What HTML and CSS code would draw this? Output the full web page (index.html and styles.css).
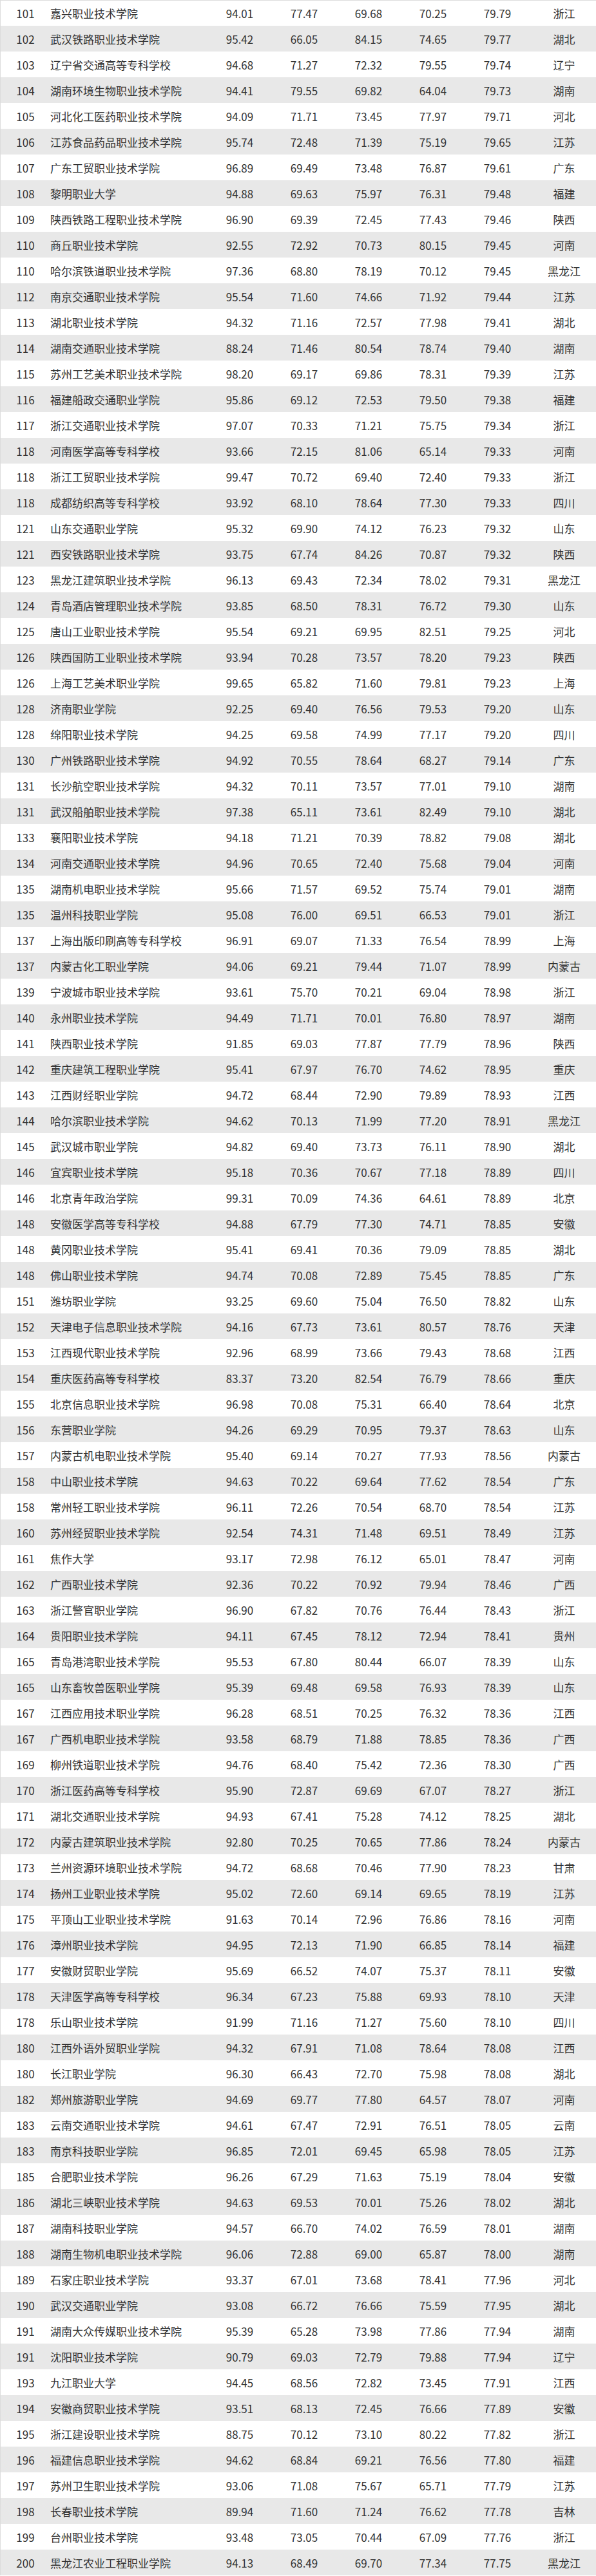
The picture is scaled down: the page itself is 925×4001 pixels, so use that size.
FILE: index.html
```html
<!DOCTYPE html>
<html lang="zh-CN">
<head>
<meta charset="utf-8">
<title>高职院校排名 101-200</title>
<link rel="stylesheet" href="styles.css">
</head>
<body>
<div class="rank-table">
<div class="row"><span class="c-rank">101</span><span class="c-name">嘉兴职业技术学院</span><span class="c-num">94.01</span><span class="c-num">77.47</span><span class="c-num">69.68</span><span class="c-num">70.25</span><span class="c-num">79.79</span><span class="c-prov">浙江</span></div>
<div class="row"><span class="c-rank">102</span><span class="c-name">武汉铁路职业技术学院</span><span class="c-num">95.42</span><span class="c-num">66.05</span><span class="c-num">84.15</span><span class="c-num">74.65</span><span class="c-num">79.77</span><span class="c-prov">湖北</span></div>
<div class="row"><span class="c-rank">103</span><span class="c-name">辽宁省交通高等专科学校</span><span class="c-num">94.68</span><span class="c-num">71.27</span><span class="c-num">72.32</span><span class="c-num">79.55</span><span class="c-num">79.74</span><span class="c-prov">辽宁</span></div>
<div class="row"><span class="c-rank">104</span><span class="c-name">湖南环境生物职业技术学院</span><span class="c-num">94.41</span><span class="c-num">79.55</span><span class="c-num">69.82</span><span class="c-num">64.04</span><span class="c-num">79.73</span><span class="c-prov">湖南</span></div>
<div class="row"><span class="c-rank">105</span><span class="c-name">河北化工医药职业技术学院</span><span class="c-num">94.09</span><span class="c-num">71.71</span><span class="c-num">73.45</span><span class="c-num">77.97</span><span class="c-num">79.71</span><span class="c-prov">河北</span></div>
<div class="row"><span class="c-rank">106</span><span class="c-name">江苏食品药品职业技术学院</span><span class="c-num">95.74</span><span class="c-num">72.48</span><span class="c-num">71.39</span><span class="c-num">75.19</span><span class="c-num">79.65</span><span class="c-prov">江苏</span></div>
<div class="row"><span class="c-rank">107</span><span class="c-name">广东工贸职业技术学院</span><span class="c-num">96.89</span><span class="c-num">69.49</span><span class="c-num">73.48</span><span class="c-num">76.87</span><span class="c-num">79.61</span><span class="c-prov">广东</span></div>
<div class="row"><span class="c-rank">108</span><span class="c-name">黎明职业大学</span><span class="c-num">94.88</span><span class="c-num">69.63</span><span class="c-num">75.97</span><span class="c-num">76.31</span><span class="c-num">79.48</span><span class="c-prov">福建</span></div>
<div class="row"><span class="c-rank">109</span><span class="c-name">陕西铁路工程职业技术学院</span><span class="c-num">96.90</span><span class="c-num">69.39</span><span class="c-num">72.45</span><span class="c-num">77.43</span><span class="c-num">79.46</span><span class="c-prov">陕西</span></div>
<div class="row"><span class="c-rank">110</span><span class="c-name">商丘职业技术学院</span><span class="c-num">92.55</span><span class="c-num">72.92</span><span class="c-num">70.73</span><span class="c-num">80.15</span><span class="c-num">79.45</span><span class="c-prov">河南</span></div>
<div class="row"><span class="c-rank">110</span><span class="c-name">哈尔滨铁道职业技术学院</span><span class="c-num">97.36</span><span class="c-num">68.80</span><span class="c-num">78.19</span><span class="c-num">70.12</span><span class="c-num">79.45</span><span class="c-prov">黑龙江</span></div>
<div class="row"><span class="c-rank">112</span><span class="c-name">南京交通职业技术学院</span><span class="c-num">95.54</span><span class="c-num">71.60</span><span class="c-num">74.66</span><span class="c-num">71.92</span><span class="c-num">79.44</span><span class="c-prov">江苏</span></div>
<div class="row"><span class="c-rank">113</span><span class="c-name">湖北职业技术学院</span><span class="c-num">94.32</span><span class="c-num">71.16</span><span class="c-num">72.57</span><span class="c-num">77.98</span><span class="c-num">79.41</span><span class="c-prov">湖北</span></div>
<div class="row"><span class="c-rank">114</span><span class="c-name">湖南交通职业技术学院</span><span class="c-num">88.24</span><span class="c-num">71.46</span><span class="c-num">80.54</span><span class="c-num">78.74</span><span class="c-num">79.40</span><span class="c-prov">湖南</span></div>
<div class="row"><span class="c-rank">115</span><span class="c-name">苏州工艺美术职业技术学院</span><span class="c-num">98.20</span><span class="c-num">69.17</span><span class="c-num">69.86</span><span class="c-num">78.31</span><span class="c-num">79.39</span><span class="c-prov">江苏</span></div>
<div class="row"><span class="c-rank">116</span><span class="c-name">福建船政交通职业学院</span><span class="c-num">95.86</span><span class="c-num">69.12</span><span class="c-num">72.53</span><span class="c-num">79.50</span><span class="c-num">79.38</span><span class="c-prov">福建</span></div>
<div class="row"><span class="c-rank">117</span><span class="c-name">浙江交通职业技术学院</span><span class="c-num">97.07</span><span class="c-num">70.33</span><span class="c-num">71.21</span><span class="c-num">75.75</span><span class="c-num">79.34</span><span class="c-prov">浙江</span></div>
<div class="row"><span class="c-rank">118</span><span class="c-name">河南医学高等专科学校</span><span class="c-num">93.66</span><span class="c-num">72.15</span><span class="c-num">81.06</span><span class="c-num">65.14</span><span class="c-num">79.33</span><span class="c-prov">河南</span></div>
<div class="row"><span class="c-rank">118</span><span class="c-name">浙江工贸职业技术学院</span><span class="c-num">99.47</span><span class="c-num">70.72</span><span class="c-num">69.40</span><span class="c-num">72.40</span><span class="c-num">79.33</span><span class="c-prov">浙江</span></div>
<div class="row"><span class="c-rank">118</span><span class="c-name">成都纺织高等专科学校</span><span class="c-num">93.92</span><span class="c-num">68.10</span><span class="c-num">78.64</span><span class="c-num">77.30</span><span class="c-num">79.33</span><span class="c-prov">四川</span></div>
<div class="row"><span class="c-rank">121</span><span class="c-name">山东交通职业学院</span><span class="c-num">95.32</span><span class="c-num">69.90</span><span class="c-num">74.12</span><span class="c-num">76.23</span><span class="c-num">79.32</span><span class="c-prov">山东</span></div>
<div class="row"><span class="c-rank">121</span><span class="c-name">西安铁路职业技术学院</span><span class="c-num">93.75</span><span class="c-num">67.74</span><span class="c-num">84.26</span><span class="c-num">70.87</span><span class="c-num">79.32</span><span class="c-prov">陕西</span></div>
<div class="row"><span class="c-rank">123</span><span class="c-name">黑龙江建筑职业技术学院</span><span class="c-num">96.13</span><span class="c-num">69.43</span><span class="c-num">72.34</span><span class="c-num">78.02</span><span class="c-num">79.31</span><span class="c-prov">黑龙江</span></div>
<div class="row"><span class="c-rank">124</span><span class="c-name">青岛酒店管理职业技术学院</span><span class="c-num">93.85</span><span class="c-num">68.50</span><span class="c-num">78.31</span><span class="c-num">76.72</span><span class="c-num">79.30</span><span class="c-prov">山东</span></div>
<div class="row"><span class="c-rank">125</span><span class="c-name">唐山工业职业技术学院</span><span class="c-num">95.54</span><span class="c-num">69.21</span><span class="c-num">69.95</span><span class="c-num">82.51</span><span class="c-num">79.25</span><span class="c-prov">河北</span></div>
<div class="row"><span class="c-rank">126</span><span class="c-name">陕西国防工业职业技术学院</span><span class="c-num">93.94</span><span class="c-num">70.28</span><span class="c-num">73.57</span><span class="c-num">78.20</span><span class="c-num">79.23</span><span class="c-prov">陕西</span></div>
<div class="row"><span class="c-rank">126</span><span class="c-name">上海工艺美术职业学院</span><span class="c-num">99.65</span><span class="c-num">65.82</span><span class="c-num">71.60</span><span class="c-num">79.81</span><span class="c-num">79.23</span><span class="c-prov">上海</span></div>
<div class="row"><span class="c-rank">128</span><span class="c-name">济南职业学院</span><span class="c-num">92.25</span><span class="c-num">69.40</span><span class="c-num">76.56</span><span class="c-num">79.53</span><span class="c-num">79.20</span><span class="c-prov">山东</span></div>
<div class="row"><span class="c-rank">128</span><span class="c-name">绵阳职业技术学院</span><span class="c-num">94.25</span><span class="c-num">69.58</span><span class="c-num">74.99</span><span class="c-num">77.17</span><span class="c-num">79.20</span><span class="c-prov">四川</span></div>
<div class="row"><span class="c-rank">130</span><span class="c-name">广州铁路职业技术学院</span><span class="c-num">94.92</span><span class="c-num">70.55</span><span class="c-num">78.64</span><span class="c-num">68.27</span><span class="c-num">79.14</span><span class="c-prov">广东</span></div>
<div class="row"><span class="c-rank">131</span><span class="c-name">长沙航空职业技术学院</span><span class="c-num">94.32</span><span class="c-num">70.11</span><span class="c-num">73.57</span><span class="c-num">77.01</span><span class="c-num">79.10</span><span class="c-prov">湖南</span></div>
<div class="row"><span class="c-rank">131</span><span class="c-name">武汉船舶职业技术学院</span><span class="c-num">97.38</span><span class="c-num">65.11</span><span class="c-num">73.61</span><span class="c-num">82.49</span><span class="c-num">79.10</span><span class="c-prov">湖北</span></div>
<div class="row"><span class="c-rank">133</span><span class="c-name">襄阳职业技术学院</span><span class="c-num">94.18</span><span class="c-num">71.21</span><span class="c-num">70.39</span><span class="c-num">78.82</span><span class="c-num">79.08</span><span class="c-prov">湖北</span></div>
<div class="row"><span class="c-rank">134</span><span class="c-name">河南交通职业技术学院</span><span class="c-num">94.96</span><span class="c-num">70.65</span><span class="c-num">72.40</span><span class="c-num">75.68</span><span class="c-num">79.04</span><span class="c-prov">河南</span></div>
<div class="row"><span class="c-rank">135</span><span class="c-name">湖南机电职业技术学院</span><span class="c-num">95.66</span><span class="c-num">71.57</span><span class="c-num">69.52</span><span class="c-num">75.74</span><span class="c-num">79.01</span><span class="c-prov">湖南</span></div>
<div class="row"><span class="c-rank">135</span><span class="c-name">温州科技职业学院</span><span class="c-num">95.08</span><span class="c-num">76.00</span><span class="c-num">69.51</span><span class="c-num">66.53</span><span class="c-num">79.01</span><span class="c-prov">浙江</span></div>
<div class="row"><span class="c-rank">137</span><span class="c-name">上海出版印刷高等专科学校</span><span class="c-num">96.91</span><span class="c-num">69.07</span><span class="c-num">71.33</span><span class="c-num">76.54</span><span class="c-num">78.99</span><span class="c-prov">上海</span></div>
<div class="row"><span class="c-rank">137</span><span class="c-name">内蒙古化工职业学院</span><span class="c-num">94.06</span><span class="c-num">69.21</span><span class="c-num">79.44</span><span class="c-num">71.07</span><span class="c-num">78.99</span><span class="c-prov">内蒙古</span></div>
<div class="row"><span class="c-rank">139</span><span class="c-name">宁波城市职业技术学院</span><span class="c-num">93.61</span><span class="c-num">75.70</span><span class="c-num">70.21</span><span class="c-num">69.04</span><span class="c-num">78.98</span><span class="c-prov">浙江</span></div>
<div class="row"><span class="c-rank">140</span><span class="c-name">永州职业技术学院</span><span class="c-num">94.49</span><span class="c-num">71.71</span><span class="c-num">70.01</span><span class="c-num">76.80</span><span class="c-num">78.97</span><span class="c-prov">湖南</span></div>
<div class="row"><span class="c-rank">141</span><span class="c-name">陕西职业技术学院</span><span class="c-num">91.85</span><span class="c-num">69.03</span><span class="c-num">77.87</span><span class="c-num">77.79</span><span class="c-num">78.96</span><span class="c-prov">陕西</span></div>
<div class="row"><span class="c-rank">142</span><span class="c-name">重庆建筑工程职业学院</span><span class="c-num">95.41</span><span class="c-num">67.97</span><span class="c-num">76.70</span><span class="c-num">74.62</span><span class="c-num">78.95</span><span class="c-prov">重庆</span></div>
<div class="row"><span class="c-rank">143</span><span class="c-name">江西财经职业学院</span><span class="c-num">94.72</span><span class="c-num">68.44</span><span class="c-num">72.90</span><span class="c-num">79.89</span><span class="c-num">78.93</span><span class="c-prov">江西</span></div>
<div class="row"><span class="c-rank">144</span><span class="c-name">哈尔滨职业技术学院</span><span class="c-num">94.62</span><span class="c-num">70.13</span><span class="c-num">71.99</span><span class="c-num">77.20</span><span class="c-num">78.91</span><span class="c-prov">黑龙江</span></div>
<div class="row"><span class="c-rank">145</span><span class="c-name">武汉城市职业学院</span><span class="c-num">94.82</span><span class="c-num">69.40</span><span class="c-num">73.73</span><span class="c-num">76.11</span><span class="c-num">78.90</span><span class="c-prov">湖北</span></div>
<div class="row"><span class="c-rank">146</span><span class="c-name">宜宾职业技术学院</span><span class="c-num">95.18</span><span class="c-num">70.36</span><span class="c-num">70.67</span><span class="c-num">77.18</span><span class="c-num">78.89</span><span class="c-prov">四川</span></div>
<div class="row"><span class="c-rank">146</span><span class="c-name">北京青年政治学院</span><span class="c-num">99.31</span><span class="c-num">70.09</span><span class="c-num">74.36</span><span class="c-num">64.61</span><span class="c-num">78.89</span><span class="c-prov">北京</span></div>
<div class="row"><span class="c-rank">148</span><span class="c-name">安徽医学高等专科学校</span><span class="c-num">94.88</span><span class="c-num">67.79</span><span class="c-num">77.30</span><span class="c-num">74.71</span><span class="c-num">78.85</span><span class="c-prov">安徽</span></div>
<div class="row"><span class="c-rank">148</span><span class="c-name">黄冈职业技术学院</span><span class="c-num">95.41</span><span class="c-num">69.41</span><span class="c-num">70.36</span><span class="c-num">79.09</span><span class="c-num">78.85</span><span class="c-prov">湖北</span></div>
<div class="row"><span class="c-rank">148</span><span class="c-name">佛山职业技术学院</span><span class="c-num">94.74</span><span class="c-num">70.08</span><span class="c-num">72.89</span><span class="c-num">75.45</span><span class="c-num">78.85</span><span class="c-prov">广东</span></div>
<div class="row"><span class="c-rank">151</span><span class="c-name">潍坊职业学院</span><span class="c-num">93.25</span><span class="c-num">69.60</span><span class="c-num">75.04</span><span class="c-num">76.50</span><span class="c-num">78.82</span><span class="c-prov">山东</span></div>
<div class="row"><span class="c-rank">152</span><span class="c-name">天津电子信息职业技术学院</span><span class="c-num">94.16</span><span class="c-num">67.73</span><span class="c-num">73.61</span><span class="c-num">80.57</span><span class="c-num">78.76</span><span class="c-prov">天津</span></div>
<div class="row"><span class="c-rank">153</span><span class="c-name">江西现代职业技术学院</span><span class="c-num">92.96</span><span class="c-num">68.99</span><span class="c-num">73.66</span><span class="c-num">79.43</span><span class="c-num">78.68</span><span class="c-prov">江西</span></div>
<div class="row"><span class="c-rank">154</span><span class="c-name">重庆医药高等专科学校</span><span class="c-num">83.37</span><span class="c-num">73.20</span><span class="c-num">82.54</span><span class="c-num">76.79</span><span class="c-num">78.66</span><span class="c-prov">重庆</span></div>
<div class="row"><span class="c-rank">155</span><span class="c-name">北京信息职业技术学院</span><span class="c-num">96.98</span><span class="c-num">70.08</span><span class="c-num">75.31</span><span class="c-num">66.40</span><span class="c-num">78.64</span><span class="c-prov">北京</span></div>
<div class="row"><span class="c-rank">156</span><span class="c-name">东营职业学院</span><span class="c-num">94.26</span><span class="c-num">69.29</span><span class="c-num">70.95</span><span class="c-num">79.37</span><span class="c-num">78.63</span><span class="c-prov">山东</span></div>
<div class="row"><span class="c-rank">157</span><span class="c-name">内蒙古机电职业技术学院</span><span class="c-num">95.40</span><span class="c-num">69.14</span><span class="c-num">70.27</span><span class="c-num">77.93</span><span class="c-num">78.56</span><span class="c-prov">内蒙古</span></div>
<div class="row"><span class="c-rank">158</span><span class="c-name">中山职业技术学院</span><span class="c-num">94.63</span><span class="c-num">70.22</span><span class="c-num">69.64</span><span class="c-num">77.62</span><span class="c-num">78.54</span><span class="c-prov">广东</span></div>
<div class="row"><span class="c-rank">158</span><span class="c-name">常州轻工职业技术学院</span><span class="c-num">96.11</span><span class="c-num">72.26</span><span class="c-num">70.54</span><span class="c-num">68.70</span><span class="c-num">78.54</span><span class="c-prov">江苏</span></div>
<div class="row"><span class="c-rank">160</span><span class="c-name">苏州经贸职业技术学院</span><span class="c-num">92.54</span><span class="c-num">74.31</span><span class="c-num">71.48</span><span class="c-num">69.51</span><span class="c-num">78.49</span><span class="c-prov">江苏</span></div>
<div class="row"><span class="c-rank">161</span><span class="c-name">焦作大学</span><span class="c-num">93.17</span><span class="c-num">72.98</span><span class="c-num">76.12</span><span class="c-num">65.01</span><span class="c-num">78.47</span><span class="c-prov">河南</span></div>
<div class="row"><span class="c-rank">162</span><span class="c-name">广西职业技术学院</span><span class="c-num">92.36</span><span class="c-num">70.22</span><span class="c-num">70.92</span><span class="c-num">79.94</span><span class="c-num">78.46</span><span class="c-prov">广西</span></div>
<div class="row"><span class="c-rank">163</span><span class="c-name">浙江警官职业学院</span><span class="c-num">96.90</span><span class="c-num">67.82</span><span class="c-num">70.76</span><span class="c-num">76.44</span><span class="c-num">78.43</span><span class="c-prov">浙江</span></div>
<div class="row"><span class="c-rank">164</span><span class="c-name">贵阳职业技术学院</span><span class="c-num">94.11</span><span class="c-num">67.45</span><span class="c-num">78.12</span><span class="c-num">72.94</span><span class="c-num">78.41</span><span class="c-prov">贵州</span></div>
<div class="row"><span class="c-rank">165</span><span class="c-name">青岛港湾职业技术学院</span><span class="c-num">95.53</span><span class="c-num">67.80</span><span class="c-num">80.44</span><span class="c-num">66.07</span><span class="c-num">78.39</span><span class="c-prov">山东</span></div>
<div class="row"><span class="c-rank">165</span><span class="c-name">山东畜牧兽医职业学院</span><span class="c-num">95.39</span><span class="c-num">69.48</span><span class="c-num">69.58</span><span class="c-num">76.93</span><span class="c-num">78.39</span><span class="c-prov">山东</span></div>
<div class="row"><span class="c-rank">167</span><span class="c-name">江西应用技术职业学院</span><span class="c-num">96.28</span><span class="c-num">68.51</span><span class="c-num">70.25</span><span class="c-num">76.32</span><span class="c-num">78.36</span><span class="c-prov">江西</span></div>
<div class="row"><span class="c-rank">167</span><span class="c-name">广西机电职业技术学院</span><span class="c-num">93.58</span><span class="c-num">68.79</span><span class="c-num">71.88</span><span class="c-num">78.85</span><span class="c-num">78.36</span><span class="c-prov">广西</span></div>
<div class="row"><span class="c-rank">169</span><span class="c-name">柳州铁道职业技术学院</span><span class="c-num">94.76</span><span class="c-num">68.40</span><span class="c-num">75.42</span><span class="c-num">72.36</span><span class="c-num">78.30</span><span class="c-prov">广西</span></div>
<div class="row"><span class="c-rank">170</span><span class="c-name">浙江医药高等专科学校</span><span class="c-num">95.90</span><span class="c-num">72.87</span><span class="c-num">69.69</span><span class="c-num">67.07</span><span class="c-num">78.27</span><span class="c-prov">浙江</span></div>
<div class="row"><span class="c-rank">171</span><span class="c-name">湖北交通职业技术学院</span><span class="c-num">94.93</span><span class="c-num">67.41</span><span class="c-num">75.28</span><span class="c-num">74.12</span><span class="c-num">78.25</span><span class="c-prov">湖北</span></div>
<div class="row"><span class="c-rank">172</span><span class="c-name">内蒙古建筑职业技术学院</span><span class="c-num">92.80</span><span class="c-num">70.25</span><span class="c-num">70.65</span><span class="c-num">77.86</span><span class="c-num">78.24</span><span class="c-prov">内蒙古</span></div>
<div class="row"><span class="c-rank">173</span><span class="c-name">兰州资源环境职业技术学院</span><span class="c-num">94.72</span><span class="c-num">68.68</span><span class="c-num">70.46</span><span class="c-num">77.90</span><span class="c-num">78.23</span><span class="c-prov">甘肃</span></div>
<div class="row"><span class="c-rank">174</span><span class="c-name">扬州工业职业技术学院</span><span class="c-num">95.02</span><span class="c-num">72.60</span><span class="c-num">69.14</span><span class="c-num">69.65</span><span class="c-num">78.19</span><span class="c-prov">江苏</span></div>
<div class="row"><span class="c-rank">175</span><span class="c-name">平顶山工业职业技术学院</span><span class="c-num">91.63</span><span class="c-num">70.14</span><span class="c-num">72.96</span><span class="c-num">76.86</span><span class="c-num">78.16</span><span class="c-prov">河南</span></div>
<div class="row"><span class="c-rank">176</span><span class="c-name">漳州职业技术学院</span><span class="c-num">94.95</span><span class="c-num">72.13</span><span class="c-num">71.90</span><span class="c-num">66.85</span><span class="c-num">78.14</span><span class="c-prov">福建</span></div>
<div class="row"><span class="c-rank">177</span><span class="c-name">安徽财贸职业学院</span><span class="c-num">95.69</span><span class="c-num">66.52</span><span class="c-num">74.07</span><span class="c-num">75.37</span><span class="c-num">78.11</span><span class="c-prov">安徽</span></div>
<div class="row"><span class="c-rank">178</span><span class="c-name">天津医学高等专科学校</span><span class="c-num">96.34</span><span class="c-num">67.23</span><span class="c-num">75.88</span><span class="c-num">69.93</span><span class="c-num">78.10</span><span class="c-prov">天津</span></div>
<div class="row"><span class="c-rank">178</span><span class="c-name">乐山职业技术学院</span><span class="c-num">91.99</span><span class="c-num">71.16</span><span class="c-num">71.27</span><span class="c-num">75.60</span><span class="c-num">78.10</span><span class="c-prov">四川</span></div>
<div class="row"><span class="c-rank">180</span><span class="c-name">江西外语外贸职业学院</span><span class="c-num">94.32</span><span class="c-num">67.91</span><span class="c-num">71.08</span><span class="c-num">78.64</span><span class="c-num">78.08</span><span class="c-prov">江西</span></div>
<div class="row"><span class="c-rank">180</span><span class="c-name">长江职业学院</span><span class="c-num">96.30</span><span class="c-num">66.43</span><span class="c-num">72.70</span><span class="c-num">75.98</span><span class="c-num">78.08</span><span class="c-prov">湖北</span></div>
<div class="row"><span class="c-rank">182</span><span class="c-name">郑州旅游职业学院</span><span class="c-num">94.69</span><span class="c-num">69.77</span><span class="c-num">77.80</span><span class="c-num">64.57</span><span class="c-num">78.07</span><span class="c-prov">河南</span></div>
<div class="row"><span class="c-rank">183</span><span class="c-name">云南交通职业技术学院</span><span class="c-num">94.61</span><span class="c-num">67.47</span><span class="c-num">72.91</span><span class="c-num">76.51</span><span class="c-num">78.05</span><span class="c-prov">云南</span></div>
<div class="row"><span class="c-rank">183</span><span class="c-name">南京科技职业学院</span><span class="c-num">96.85</span><span class="c-num">72.01</span><span class="c-num">69.45</span><span class="c-num">65.98</span><span class="c-num">78.05</span><span class="c-prov">江苏</span></div>
<div class="row"><span class="c-rank">185</span><span class="c-name">合肥职业技术学院</span><span class="c-num">96.26</span><span class="c-num">67.29</span><span class="c-num">71.63</span><span class="c-num">75.19</span><span class="c-num">78.04</span><span class="c-prov">安徽</span></div>
<div class="row"><span class="c-rank">186</span><span class="c-name">湖北三峡职业技术学院</span><span class="c-num">94.63</span><span class="c-num">69.53</span><span class="c-num">70.01</span><span class="c-num">75.26</span><span class="c-num">78.02</span><span class="c-prov">湖北</span></div>
<div class="row"><span class="c-rank">187</span><span class="c-name">湖南科技职业学院</span><span class="c-num">94.57</span><span class="c-num">66.70</span><span class="c-num">74.02</span><span class="c-num">76.59</span><span class="c-num">78.01</span><span class="c-prov">湖南</span></div>
<div class="row"><span class="c-rank">188</span><span class="c-name">湖南生物机电职业技术学院</span><span class="c-num">96.06</span><span class="c-num">72.88</span><span class="c-num">69.00</span><span class="c-num">65.87</span><span class="c-num">78.00</span><span class="c-prov">湖南</span></div>
<div class="row"><span class="c-rank">189</span><span class="c-name">石家庄职业技术学院</span><span class="c-num">93.37</span><span class="c-num">67.01</span><span class="c-num">73.68</span><span class="c-num">78.41</span><span class="c-num">77.96</span><span class="c-prov">河北</span></div>
<div class="row"><span class="c-rank">190</span><span class="c-name">武汉交通职业学院</span><span class="c-num">93.08</span><span class="c-num">66.72</span><span class="c-num">76.66</span><span class="c-num">75.59</span><span class="c-num">77.95</span><span class="c-prov">湖北</span></div>
<div class="row"><span class="c-rank">191</span><span class="c-name">湖南大众传媒职业技术学院</span><span class="c-num">95.39</span><span class="c-num">65.28</span><span class="c-num">73.98</span><span class="c-num">77.86</span><span class="c-num">77.94</span><span class="c-prov">湖南</span></div>
<div class="row"><span class="c-rank">191</span><span class="c-name">沈阳职业技术学院</span><span class="c-num">90.79</span><span class="c-num">69.03</span><span class="c-num">72.79</span><span class="c-num">79.88</span><span class="c-num">77.94</span><span class="c-prov">辽宁</span></div>
<div class="row"><span class="c-rank">193</span><span class="c-name">九江职业大学</span><span class="c-num">94.45</span><span class="c-num">68.56</span><span class="c-num">72.82</span><span class="c-num">73.45</span><span class="c-num">77.91</span><span class="c-prov">江西</span></div>
<div class="row"><span class="c-rank">194</span><span class="c-name">安徽商贸职业技术学院</span><span class="c-num">93.51</span><span class="c-num">68.13</span><span class="c-num">72.45</span><span class="c-num">76.66</span><span class="c-num">77.89</span><span class="c-prov">安徽</span></div>
<div class="row"><span class="c-rank">195</span><span class="c-name">浙江建设职业技术学院</span><span class="c-num">88.75</span><span class="c-num">70.12</span><span class="c-num">73.10</span><span class="c-num">80.22</span><span class="c-num">77.82</span><span class="c-prov">浙江</span></div>
<div class="row"><span class="c-rank">196</span><span class="c-name">福建信息职业技术学院</span><span class="c-num">94.62</span><span class="c-num">68.84</span><span class="c-num">69.21</span><span class="c-num">76.56</span><span class="c-num">77.80</span><span class="c-prov">福建</span></div>
<div class="row"><span class="c-rank">197</span><span class="c-name">苏州卫生职业技术学院</span><span class="c-num">93.06</span><span class="c-num">71.08</span><span class="c-num">75.67</span><span class="c-num">65.71</span><span class="c-num">77.79</span><span class="c-prov">江苏</span></div>
<div class="row"><span class="c-rank">198</span><span class="c-name">长春职业技术学院</span><span class="c-num">89.94</span><span class="c-num">71.60</span><span class="c-num">71.24</span><span class="c-num">76.62</span><span class="c-num">77.78</span><span class="c-prov">吉林</span></div>
<div class="row"><span class="c-rank">199</span><span class="c-name">台州职业技术学院</span><span class="c-num">93.48</span><span class="c-num">73.05</span><span class="c-num">70.44</span><span class="c-num">67.09</span><span class="c-num">77.76</span><span class="c-prov">浙江</span></div>
<div class="row"><span class="c-rank">200</span><span class="c-name">黑龙江农业工程职业学院</span><span class="c-num">94.13</span><span class="c-num">68.49</span><span class="c-num">69.70</span><span class="c-num">77.34</span><span class="c-num">77.75</span><span class="c-prov">黑龙江</span></div>
</div>
</body>
</html>
```

FILE: styles.css
```css
html, body {
  margin: 0;
  padding: 0;
  background: #ffffff;
}

body {
  font-family: "Noto Sans CJK SC", "Noto Sans", sans-serif;
  font-size: 17px;
  color: #333333;
}

.rank-table {
  width: 925px;
  border-left: 1px solid #dcdcdc;
  box-sizing: border-box;
}

.row {
  display: grid;
  grid-template-columns: 77px 244px 100px 100px 100px 100px 100px 1fr;
  align-items: center;
  height: 40px;
  box-sizing: border-box;
  white-space: nowrap;
}

.row:first-child {
  border-top: 1px solid #dcdcdc;
}

.row:nth-child(even) {
  background: #e8e8e8;
}

.c-rank {
  text-align: center;
}

.c-name {
  text-align: left;
}

.c-num {
  text-align: center;
}

.c-prov {
  text-align: center;
  padding-left: 4px;
}
```
